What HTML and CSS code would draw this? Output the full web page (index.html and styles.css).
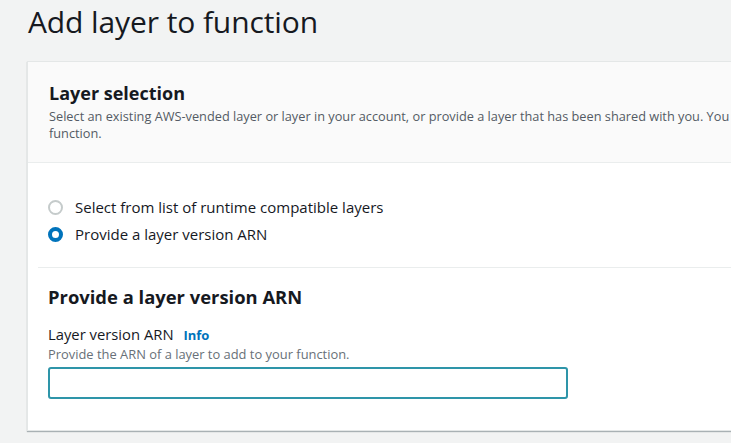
FILE: index.html
```html
<!DOCTYPE html>
<html lang="en">
<head>
<meta charset="utf-8">
<title>Add layer to function</title>
<link rel="stylesheet" href="styles.css">
</head>
<body>
<div class="page">
  <h1 class="page-title">Add layer to function</h1>
  <div class="card">
    <div class="card-header">
      <h2 class="card-title">Layer selection</h2>
      <p class="card-desc">Select an existing AWS-vended layer or layer in your account, or provide a layer that has been shared with you. You can add up to five layers to a<br>function.</p>
    </div>
    <div class="card-body">
      <div class="radios">
        <label class="radio"><span class="radio-dot"></span><span>Select from list of runtime compatible layers</span></label>
        <label class="radio"><span class="radio-dot checked"></span><span>Provide a layer version ARN</span></label>
      </div>
      <div class="section">
        <h3 class="section-title">Provide a layer version ARN</h3>
        <div class="field-label">Layer version ARN <a class="info">Info</a></div>
        <div class="field-hint">Provide the ARN of a layer to add to your function.</div>
        <div class="input"></div>
      </div>
    </div>
  </div>
</div>
</body>
</html>
```

FILE: styles.css
```css
html, body {
  margin: 0;
  padding: 0;
  background: #f2f3f3;
  overflow: hidden;
  font-family: "Open Sans", "Noto Sans", sans-serif;
  color: #16191f;
}
.page {
  width: 731px;
  height: 443px;
  overflow: hidden;
  padding-left: 27px;
  box-sizing: border-box;
}
.page-title {
  margin: 0;
  padding: 1px 0 0 1px;
  font-size: 30px;
  font-weight: 400;
  line-height: 42px;
  height: 60px;
  letter-spacing: -0.1px;
}
.card {
  width: 1000px;
  background: #fff;
  border: 1px solid #e4e7e7;
  border-right: none;
  box-shadow: 0 1px 1px 0 rgba(0, 28, 36, 0.3);
}
.card-header {
  background: #fafafa;
  border-bottom: 1px solid #eaeded;
  padding: 18px 20px 20px 21px;
  height: 62px;
}
.card-title {
  margin: 0;
  font-size: 18px;
  font-weight: 700;
  line-height: 26px;
}
.card-desc {
  margin: 2px 0 0 0;
  white-space: nowrap;
  font-size: 12.75px;
  line-height: 17px;
  color: #545b64;
}
.card-body {
  padding: 34px 0 31px 10px;
}
.radios {
  padding-left: 10px;
  display: flex;
  flex-direction: column;
  gap: 7px;
  padding-bottom: 23px;
  border-bottom: 1px solid #eaeded;
}
.radio {
  display: flex;
  align-items: center;
  gap: 12px;
  font-size: 15px;
  line-height: 20px;
}
.radio-dot {
  width: 15px;
  height: 15px;
  border-radius: 50%;
  border: 2px solid #c5cbcb;
  box-sizing: border-box;
  background: #fff;
}
.radio-dot.checked {
  border: 4.5px solid #0073bb;
}
.section {
  padding: 17px 0 0 10px;
}
.section-title {
  margin: 0;
  font-size: 18.4px;
  font-weight: 700;
  line-height: 24px;
}
.field-label {
  margin-top: 15px;
  font-size: 14.8px;
  line-height: 20px;
}
.info {
  margin-left: 6px;
  color: #0073bb;
  font-weight: 700;
  font-size: 13px;
}
.field-hint {
  font-size: 12.9px;
  line-height: 18px;
  color: #687078;
}
.input {
  margin-top: 4px;
  width: 516px;
  height: 28px;
  border: 2px solid #2e95a9;
  border-radius: 3px;
}
```
